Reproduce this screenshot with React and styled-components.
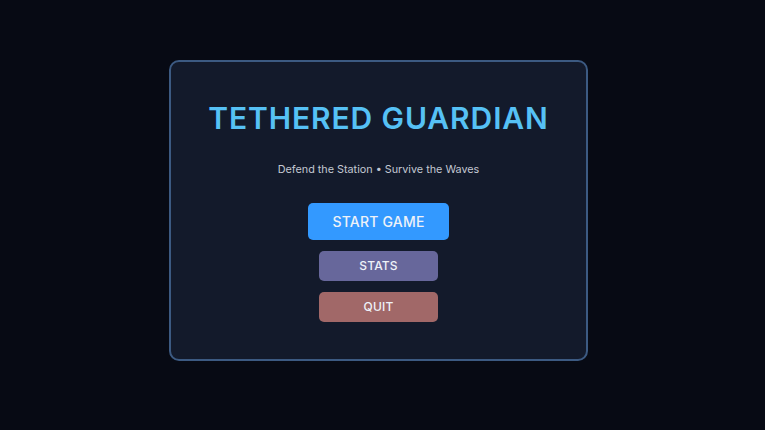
import React from "react";
import styled, { createGlobalStyle } from "styled-components";

const GlobalStyle = createGlobalStyle`
  html, body {
    margin: 0;
    padding: 0;
    background: #070a14;
  }
  body {
    font-family: Inter, "Noto Sans", sans-serif;
  }
`;

const Screen = styled.div`
  width: 765px;
  height: 430px;
  display: flex;
  align-items: center;
  justify-content: center;
  background: #070a14;
`;

const Card = styled.div`
  box-sizing: border-box;
  width: 419px;
  height: 301px;
  margin-top: -10px;
  margin-left: -8px;
  padding-top: 38px;
  background: #131a2b;
  border: 2px solid #3c5a82;
  border-radius: 10px;
  display: flex;
  flex-direction: column;
  align-items: center;
`;

const Title = styled.h1`
  margin: 0;
  font-size: 30px;
  line-height: 36px;
  font-weight: 600;
  letter-spacing: 0.9px;
  color: #56c1f5;
`;

const Subtitle = styled.p`
  margin: 27px 0 0;
  font-size: 10.8px;
  line-height: 14px;
  color: #c3c8d2;
`;

const Buttons = styled.div`
  margin-top: 26px;
  display: flex;
  flex-direction: column;
  align-items: center;
  gap: 11px;
`;

const MenuButton = styled.button`
  box-sizing: border-box;
  width: ${(p) => (p.$primary ? "141px" : "119px")};
  height: ${(p) => (p.$primary ? "37px" : "30px")};
  border: none;
  border-radius: 5px;
  background: ${(p) => p.$bg};
  color: #eef2f8;
  font-family: Inter, "Noto Sans", sans-serif;
  font-size: ${(p) => (p.$primary ? "14px" : "12px")};
  font-weight: 500;
  letter-spacing: 0.2px;
  cursor: pointer;
`;

export default function App() {
  return (
    <>
      <GlobalStyle />
      <Screen>
        <Card>
          <Title>TETHERED GUARDIAN</Title>
          <Subtitle>Defend the Station • Survive the Waves</Subtitle>
          <Buttons>
            <MenuButton $primary $bg="#3399ff">START GAME</MenuButton>
            <MenuButton $bg="#67679b">STATS</MenuButton>
            <MenuButton $bg="#a16868">QUIT</MenuButton>
          </Buttons>
        </Card>
      </Screen>
    </>
  );
}
